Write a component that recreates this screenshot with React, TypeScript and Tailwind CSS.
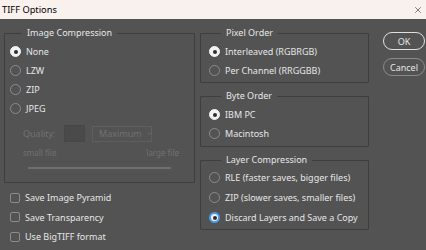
import { X, ChevronDown } from 'lucide-react';

type RadioProps = { label: string; checked?: boolean; focused?: boolean };

function Radio({ label, checked, focused }: RadioProps) {
  return (
    <div className="flex items-center h-[19px] gap-[5px] whitespace-nowrap">
      {checked ? (
        <span
          className={`flex items-center justify-center w-[11px] h-[11px] rounded-full bg-[#f2f2f2] ${
            focused ? 'border-2 border-[#4d9be6]' : 'border border-[#f2f2f2]'
          }`}
        >
          <span className="w-[4px] h-[4px] rounded-full bg-[#2e2e2e]" />
        </span>
      ) : (
        <span className="w-[11px] h-[11px] rounded-full border border-[#8c8c8c]" />
      )}
      <span>{label}</span>
    </div>
  );
}

function Checkbox({ label }: { label: string }) {
  return (
    <div className="flex items-center h-[19.5px] gap-[5px] whitespace-nowrap">
      <span className="w-[10px] h-[10px] rounded-[2px] border border-[#8c8c8c]" />
      <span>{label}</span>
    </div>
  );
}

function Group({ title, className, children }: { title: string; className?: string; children: React.ReactNode }) {
  return (
    <fieldset className={`border border-[#3e3e3e] rounded-[1px] ${className ?? ''}`}>
      <legend className="ml-[12px] px-[5px] leading-4 whitespace-nowrap">{title}</legend>
      {children}
    </fieldset>
  );
}

export default function App() {
  return (
    <div
      className="w-[426px] h-[250px] flex flex-col bg-[#535353] text-[#e6e6e6] text-[9px] overflow-hidden"
      style={{ fontFamily: '"Noto Sans", "Open Sans", sans-serif' }}
    >
      {/* Title bar */}
      <div className="h-[19px] bg-[#f9f1ed] text-black flex items-center justify-between pl-[2px] pr-[3px]">
        <span className="text-[9.3px]">TIFF Options</span>
        <X className="w-[10px] h-[10px] text-[#333]" strokeWidth={1.5} />
      </div>

      <div className="flex pt-[6px] pl-[4px]">
        {/* Left column */}
        <div className="w-[191px] flex flex-col">
          <Group title="Image Compression" className="h-[158px] pl-[5px]">
            <div className="pt-[1px]">
              <Radio label="None" checked />
              <Radio label="LZW" />
              <Radio label="ZIP" />
              <Radio label="JPEG" />
            </div>
            <div className="text-[#717171] pl-[13px] pr-[13px]">
              <div className="flex items-center mt-[7px] h-[17px]">
                <span className="w-[41px]">Quality:</span>
                <span className="w-[21px] h-[17px] border border-[#474747] bg-[#4a4a4a]" />
                <span className="ml-[7px] w-[60px] h-[16px] border border-[#5e5e5e] flex items-center gap-[4px] pl-[6px]">
                  <span>Maximum</span>
                  <ChevronDown className="w-[7px] h-[7px] shrink-0 text-[#7a7a7a]" strokeWidth={2} />
                </span>
              </div>
              <div className="flex justify-between text-[8px] mt-[5px] pr-[2px]">
                <span>small file</span>
                <span>large file</span>
              </div>
              <div className="mt-[8px] ml-[5px] w-[143px] h-[2px] bg-[#6e6e6e]" />
            </div>
          </Group>
          <div className="mt-[5px] pl-[6px]">
            <Checkbox label="Save Image Pyramid" />
            <Checkbox label="Save Transparency" />
            <Checkbox label="Use BigTIFF format" />
          </div>
        </div>

        {/* Middle column */}
        <div className="ml-[5px] w-[169px] flex flex-col gap-[5px]">
          <Group title="Pixel Order" className="h-[58px] pl-[8px]">
            <div className="pt-[1px]">
              <Radio label="Interleaved (RGBRGB)" checked />
              <Radio label="Per Channel (RRGGBB)" />
            </div>
          </Group>
          <Group title="Byte Order" className="h-[59px] pl-[8px]">
            <div className="pt-[1px]">
              <Radio label="IBM PC" checked />
              <Radio label="Macintosh" />
            </div>
          </Group>
          <Group title="Layer Compression" className="h-[78px] pl-[8px]">
            <div className="flex flex-col gap-[1px]">
              <Radio label="RLE (faster saves, bigger files)" />
              <Radio label="ZIP (slower saves, smaller files)" />
              <Radio label="Discard Layers and Save a Copy" checked focused />
            </div>
          </Group>
        </div>

        {/* Buttons */}
        <div className="ml-[14px] pt-[7px] flex flex-col gap-[8px]">
          <button className="w-[42px] h-[18px] rounded-full border-[1.5px] border-[#e0e0e0] flex items-center justify-center leading-none">
            OK
          </button>
          <button className="w-[42px] h-[18px] rounded-full border border-[#8a8a8a] flex items-center justify-center leading-none">
            Cancel
          </button>
        </div>
      </div>
    </div>
  );
}
